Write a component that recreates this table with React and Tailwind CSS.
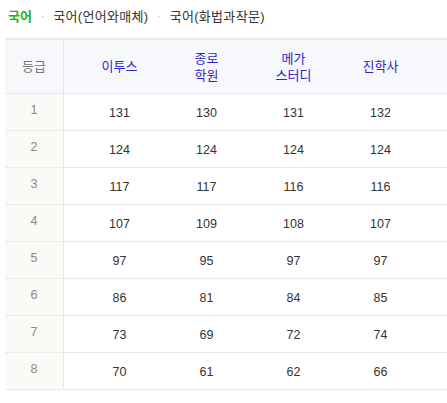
const ROWS = [
  [1, 131, 130, 131, 132],
  [2, 124, 124, 124, 124],
  [3, 117, 117, 116, 116],
  [4, 107, 109, 108, 107],
  [5, 97, 95, 97, 97],
  [6, 86, 81, 84, 85],
  [7, 73, 69, 72, 74],
  [8, 70, 61, 62, 66],
]

const HEADS = [['이투스'], ['종로', '학원'], ['메가', '스터디'], ['진학사']]

const font = { fontFamily: '"Liberation Sans", "Noto Sans CJK KR", sans-serif' }

export default function App() {
  return (
    <div className="w-[447px] h-[403px] bg-white overflow-hidden" style={font}>
      {/* Subject tabs */}
      <div className="flex items-center h-[35px] pl-[8px] pb-[2px] text-[13px] text-[#333]">
        <span className="font-bold text-[#1fb41f]">국어</span>
        <span className="mx-[9px] text-[#bbb] text-[10px]">·</span>
        <span className="tracking-[0.3px]">국어(언어와매체)</span>
        <span className="mx-[9px] text-[#bbb] text-[10px]">·</span>
        <span className="tracking-[0.3px]">국어(화법과작문)</span>
      </div>

      {/* Grade table */}
      <div className="ml-[5px] mt-[3px] border-t-2 border-[#e8eaee]">
        <div className="flex h-[54px] bg-[#f7f8fb] border-b border-[#e6e8ec] text-[13px]">
          <div className="w-[59px] flex items-center justify-center text-[#777] border-r border-[#e6e8ec]">등급</div>
          <div className="w-[12px]" />
          {HEADS.map((h, i) => (
            <div key={i} className="w-[87px] flex flex-col items-center justify-center leading-[17px] text-[#3322c8]">
              {h.map(t => <span key={t}>{t}</span>)}
            </div>
          ))}
        </div>
        {ROWS.map(([g, ...vals]) => (
          <div key={g} className="flex h-[37px] border-b border-[#e8eaee] text-[12.5px]">
            <div className="w-[59px] flex items-center justify-center text-[#888] bg-[#fafaf6] border-r border-[#e6e8ec] pb-[4px]">{g}</div>
            <div className="w-[12px]" />
            {vals.map((v, i) => (
              <div key={i} className="w-[87px] flex items-center justify-center text-[#333] pt-[2px]">{v}</div>
            ))}
          </div>
        ))}
      </div>
    </div>
  )
}
